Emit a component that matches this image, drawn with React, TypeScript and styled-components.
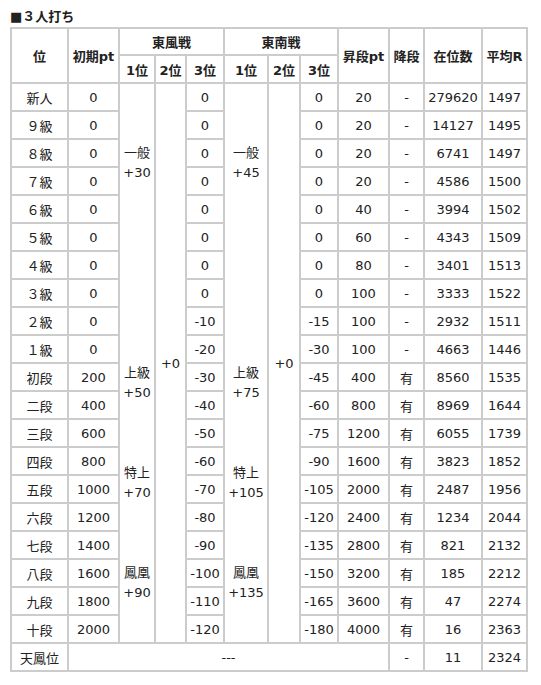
import React from 'react';
import styled, { createGlobalStyle } from 'styled-components';

const GlobalStyle = createGlobalStyle`
  body {
    margin: 0;
    background: #fff;
  }
`;

const Page = styled.div`
  padding: 8px 10px;
  font-family: 'DejaVu Sans', 'Noto Sans CJK JP', sans-serif;
  font-size: 13px;
  color: #222;
`;

const Title = styled.h3`
  margin: 0 0 1px;
  font-size: 13px;
  line-height: 18px;
  font-weight: bold;
`;

const Table = styled.table`
  border-collapse: collapse;
  table-layout: fixed;
  border: 2px solid #ccc;
`;

const Col = styled.col<{ $w: number }>`
  width: ${({ $w }) => $w}px;
`;

const Row = styled.tr<{ $h?: number }>`
  height: ${({ $h }) => $h ?? 28}px;
`;

const Th = styled.th`
  border: 2px solid #ccc;
  padding: 0;
  text-align: center;
  font-weight: bold;
  white-space: nowrap;
`;

const Td = styled.td`
  border: 2px solid #ccc;
  padding: 0;
  text-align: center;
  white-space: nowrap;
`;

// one tall cell holding the table-tier bonuses (一般 / 上級 / 特上 / 鳳凰)
const TierCell = styled(Td)`
  vertical-align: top;
  line-height: 20px;
`;

const Tier = styled.div<{ $gap: number }>`
  margin-top: ${({ $gap }) => $gap}px;
`;

const cols = [57, 51, 36, 31, 38, 44, 32, 38, 51, 35, 58, 45];

type Rank = {
  name: string;
  start: number;
  east3: number;
  south3: number;
  up: number;
  down: boolean;
  count: number;
  rate: number;
};

const ranks: Rank[] = [
  { name: '新人', start: 0, east3: 0, south3: 0, up: 20, down: false, count: 279620, rate: 1497 },
  { name: '９級', start: 0, east3: 0, south3: 0, up: 20, down: false, count: 14127, rate: 1495 },
  { name: '８級', start: 0, east3: 0, south3: 0, up: 20, down: false, count: 6741, rate: 1497 },
  { name: '７級', start: 0, east3: 0, south3: 0, up: 20, down: false, count: 4586, rate: 1500 },
  { name: '６級', start: 0, east3: 0, south3: 0, up: 40, down: false, count: 3994, rate: 1502 },
  { name: '５級', start: 0, east3: 0, south3: 0, up: 60, down: false, count: 4343, rate: 1509 },
  { name: '４級', start: 0, east3: 0, south3: 0, up: 80, down: false, count: 3401, rate: 1513 },
  { name: '３級', start: 0, east3: 0, south3: 0, up: 100, down: false, count: 3333, rate: 1522 },
  { name: '２級', start: 0, east3: -10, south3: -15, up: 100, down: false, count: 2932, rate: 1511 },
  { name: '１級', start: 0, east3: -20, south3: -30, up: 100, down: false, count: 4663, rate: 1446 },
  { name: '初段', start: 200, east3: -30, south3: -45, up: 400, down: true, count: 8560, rate: 1535 },
  { name: '二段', start: 400, east3: -40, south3: -60, up: 800, down: true, count: 8969, rate: 1644 },
  { name: '三段', start: 600, east3: -50, south3: -75, up: 1200, down: true, count: 6055, rate: 1739 },
  { name: '四段', start: 800, east3: -60, south3: -90, up: 1600, down: true, count: 3823, rate: 1852 },
  { name: '五段', start: 1000, east3: -70, south3: -105, up: 2000, down: true, count: 2487, rate: 1956 },
  { name: '六段', start: 1200, east3: -80, south3: -120, up: 2400, down: true, count: 1234, rate: 2044 },
  { name: '七段', start: 1400, east3: -90, south3: -135, up: 2800, down: true, count: 821, rate: 2132 },
  { name: '八段', start: 1600, east3: -100, south3: -150, up: 3200, down: true, count: 185, rate: 2212 },
  { name: '九段', start: 1800, east3: -110, south3: -165, up: 3600, down: true, count: 47, rate: 2274 },
  { name: '十段', start: 2000, east3: -120, south3: -180, up: 4000, down: true, count: 16, rate: 2363 },
];

const tierGaps = [59, 180, 60, 60];
const tierNames = ['一般', '上級', '特上', '鳳凰'];

const Tiers = ({ bonus }: { bonus: number[] }) => (
  <TierCell rowSpan={ranks.length}>
    {tierNames.map((t, i) => (
      <Tier key={t} $gap={tierGaps[i]}>
        {t}
        <br />+{bonus[i]}
      </Tier>
    ))}
  </TierCell>
);

const App = () => (
  <Page>
    <GlobalStyle />
    <Title>■３人打ち</Title>
    <Table>
      <colgroup>
        {cols.map((w, i) => (
          <Col key={i} $w={w} />
        ))}
      </colgroup>
      <thead>
        <Row $h={27}>
          <Th rowSpan={2}>位</Th>
          <Th rowSpan={2}>初期pt</Th>
          <Th colSpan={3}>東風戦</Th>
          <Th colSpan={3}>東南戦</Th>
          <Th rowSpan={2}>昇段pt</Th>
          <Th rowSpan={2}>降段</Th>
          <Th rowSpan={2}>在位数</Th>
          <Th rowSpan={2}>平均R</Th>
        </Row>
        <Row>
          <Th>1位</Th>
          <Th>2位</Th>
          <Th>3位</Th>
          <Th>1位</Th>
          <Th>2位</Th>
          <Th>3位</Th>
        </Row>
      </thead>
      <tbody>
        {ranks.map((r, i) => (
          <Row key={r.name}>
            <Td>{r.name}</Td>
            <Td>{r.start}</Td>
            {i === 0 && <Tiers bonus={[30, 50, 70, 90]} />}
            {i === 0 && <Td rowSpan={ranks.length}>+0</Td>}
            <Td>{r.east3}</Td>
            {i === 0 && <Tiers bonus={[45, 75, 105, 135]} />}
            {i === 0 && <Td rowSpan={ranks.length}>+0</Td>}
            <Td>{r.south3}</Td>
            <Td>{r.up}</Td>
            <Td>{r.down ? '有' : '-'}</Td>
            <Td>{r.count}</Td>
            <Td>{r.rate}</Td>
          </Row>
        ))}
        <Row>
          <Td>天鳳位</Td>
          <Td colSpan={8}>---</Td>
          <Td>-</Td>
          <Td>11</Td>
          <Td>2324</Td>
        </Row>
      </tbody>
    </Table>
  </Page>
);

export default App;
